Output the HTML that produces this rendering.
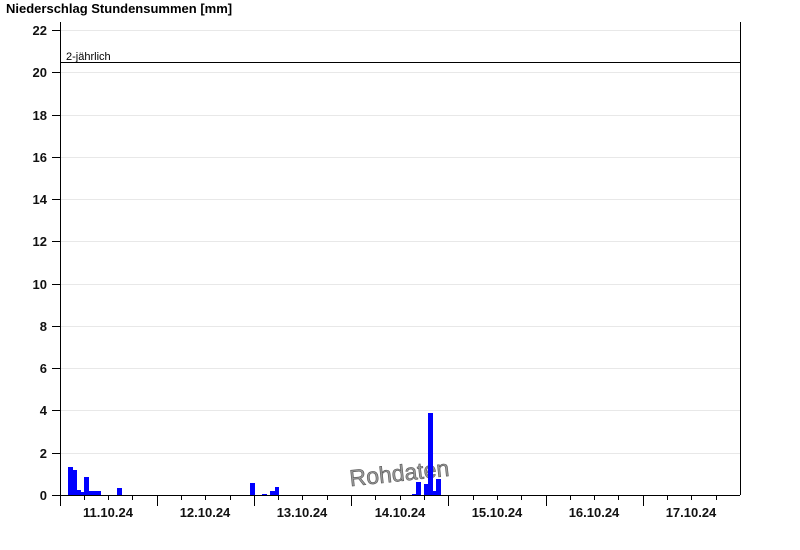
<!DOCTYPE html><html><head><style>body{margin:0;background:#fff}svg{display:block;font-family:"Liberation Sans",sans-serif}</style></head><body>
<svg width="800" height="550" xmlns="http://www.w3.org/2000/svg">
<text x="6" y="13" font-size="13" font-weight="bold">Niederschlag Stundensummen [mm]</text>
<g stroke="#e8e8e8" stroke-width="1">
<line x1="60" x2="740" y1="30.5" y2="30.5"/><line x1="60" x2="740" y1="72.5" y2="72.5"/><line x1="60" x2="740" y1="115.5" y2="115.5"/><line x1="60" x2="740" y1="157.5" y2="157.5"/><line x1="60" x2="740" y1="199.5" y2="199.5"/><line x1="60" x2="740" y1="241.5" y2="241.5"/><line x1="60" x2="740" y1="284.5" y2="284.5"/><line x1="60" x2="740" y1="326.5" y2="326.5"/><line x1="60" x2="740" y1="368.5" y2="368.5"/><line x1="60" x2="740" y1="410.5" y2="410.5"/><line x1="60" x2="740" y1="453.5" y2="453.5"/>
</g>
<g font-size="13" font-weight="bold" text-anchor="end" fill="#111">
<text x="47" y="35">22</text><text x="47" y="77">20</text><text x="47" y="120">18</text><text x="47" y="162">16</text><text x="47" y="204">14</text><text x="47" y="246">12</text><text x="47" y="289">10</text><text x="47" y="331">8</text><text x="47" y="373">6</text><text x="47" y="415">4</text><text x="47" y="458">2</text><text x="47" y="500">0</text>
</g>
<g stroke="#000" stroke-width="1">
<line x1="60.5" y1="22" x2="60.5" y2="506"/><line x1="740.5" y1="22" x2="740.5" y2="495"/>
<line x1="60" y1="495.5" x2="740" y2="495.5"/>
<line x1="52" x2="60" y1="30.5" y2="30.5"/><line x1="52" x2="60" y1="72.5" y2="72.5"/><line x1="52" x2="60" y1="115.5" y2="115.5"/><line x1="52" x2="60" y1="157.5" y2="157.5"/><line x1="52" x2="60" y1="199.5" y2="199.5"/><line x1="52" x2="60" y1="241.5" y2="241.5"/><line x1="52" x2="60" y1="284.5" y2="284.5"/><line x1="52" x2="60" y1="326.5" y2="326.5"/><line x1="52" x2="60" y1="368.5" y2="368.5"/><line x1="52" x2="60" y1="410.5" y2="410.5"/><line x1="52" x2="60" y1="453.5" y2="453.5"/><line x1="52" x2="60" y1="495.5" y2="495.5"/>
<line x1="60" x2="740" y1="62.5" y2="62.5"/>
<line x1="84.5" x2="84.5" y1="495" y2="500"/><line x1="108.5" x2="108.5" y1="495" y2="500"/><line x1="132.5" x2="132.5" y1="495" y2="500"/><line x1="157.5" x2="157.5" y1="495" y2="506"/>
<line x1="181.5" x2="181.5" y1="495" y2="500"/><line x1="205.5" x2="205.5" y1="495" y2="500"/><line x1="230.5" x2="230.5" y1="495" y2="500"/><line x1="254.5" x2="254.5" y1="495" y2="506"/>
<line x1="278.5" x2="278.5" y1="495" y2="500"/><line x1="302.5" x2="302.5" y1="495" y2="500"/><line x1="327.5" x2="327.5" y1="495" y2="500"/><line x1="351.5" x2="351.5" y1="495" y2="506"/>
<line x1="375.5" x2="375.5" y1="495" y2="500"/><line x1="400.5" x2="400.5" y1="495" y2="500"/><line x1="424.5" x2="424.5" y1="495" y2="500"/><line x1="448.5" x2="448.5" y1="495" y2="506"/>
<line x1="473.5" x2="473.5" y1="495" y2="500"/><line x1="497.5" x2="497.5" y1="495" y2="500"/><line x1="521.5" x2="521.5" y1="495" y2="500"/><line x1="546.5" x2="546.5" y1="495" y2="506"/>
<line x1="570.5" x2="570.5" y1="495" y2="500"/><line x1="594.5" x2="594.5" y1="495" y2="500"/><line x1="618.5" x2="618.5" y1="495" y2="500"/><line x1="643.5" x2="643.5" y1="495" y2="506"/>
<line x1="667.5" x2="667.5" y1="495" y2="500"/><line x1="691.5" x2="691.5" y1="495" y2="500"/><line x1="716.5" x2="716.5" y1="495" y2="500"/>
</g>
<text x="66" y="60" font-size="11">2-jährlich</text>
<g font-size="13" font-weight="bold" text-anchor="middle" fill="#111">
<text x="108" y="517">11.10.24</text><text x="205" y="517">12.10.24</text><text x="302" y="517">13.10.24</text><text x="400" y="517">14.10.24</text><text x="497" y="517">15.10.24</text><text x="594" y="517">16.10.24</text><text x="691" y="517">17.10.24</text>
</g>
<text x="349" y="481" font-size="23" fill="#999" stroke="#555" stroke-width="0.6" transform="rotate(-6 400 470)" textLength="100">Rohdaten</text>
<g fill="#0000ff">
<rect x="68" y="467" width="5" height="28"/><rect x="72" y="470" width="5" height="25"/><rect x="77" y="490" width="4" height="5"/><rect x="81" y="492" width="4" height="3"/><rect x="84" y="477" width="5" height="18"/><rect x="89" y="491" width="12" height="4"/><rect x="117" y="488" width="5" height="7"/>
<rect x="250" y="483" width="5" height="12"/><rect x="262" y="494" width="5" height="1"/><rect x="270" y="491" width="5" height="4"/><rect x="275" y="487" width="4" height="8"/>
<rect x="412" y="494" width="4" height="1"/><rect x="416" y="482" width="5" height="13"/><rect x="424" y="484" width="4" height="11"/><rect x="428" y="413" width="5" height="82"/><rect x="433" y="491" width="3" height="4"/><rect x="436" y="479" width="5" height="16"/>
</g>
</svg></body></html>
